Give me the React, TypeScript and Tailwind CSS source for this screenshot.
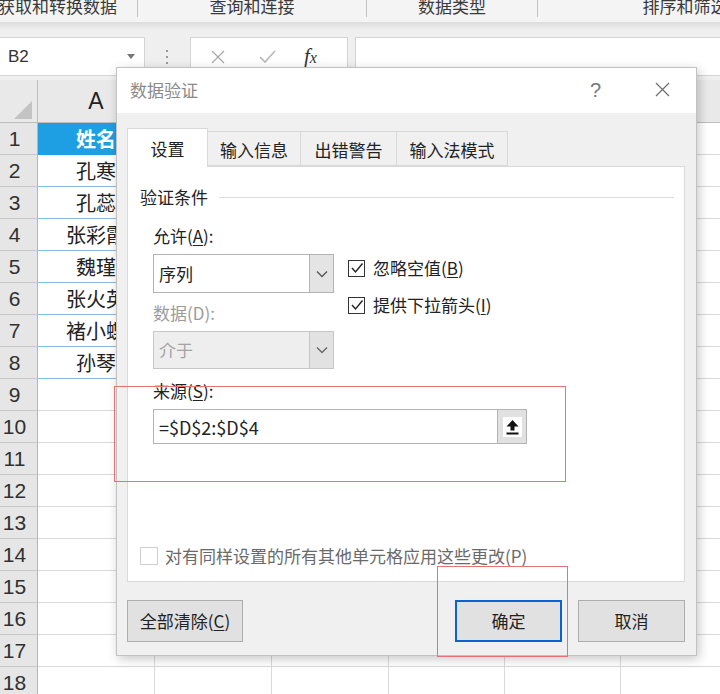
import React from 'react';

const names = ['姓名', '孔寒', '孔蕊', '张彩霞', '魏瑾', '张火英', '褚小蝶', '孙琴'];

// column widths of A..F
const colClass = ['w-[117px]', 'w-[117px]', 'w-[117px]', 'w-[116px]', 'w-[116px]', 'w-[117px]'];

function Chevron({ color = '#555' }: { color?: string }) {
  return (
    <svg width="14" height="14" viewBox="0 0 14 14">
      <polyline points="2,4.5 7,9.5 12,4.5" fill="none" stroke={color} strokeWidth="1.3" />
    </svg>
  );
}

function Check() {
  return (
    <svg width="14" height="14" viewBox="0 0 14 14">
      <polyline points="2,7 5.5,11 12.5,2.5" fill="none" stroke="#222" strokeWidth="1.4" />
    </svg>
  );
}

function Ribbon() {
  return (
    <div className="h-[37px] bg-[#efefef] flex flex-col">
      <div className="h-[22px] bg-[#f4f4f4] flex overflow-hidden text-[17px] leading-[20px] text-[#3a3a3a]">
        <div className="w-[138px] shrink-0 h-[17px] border-r border-[#c4c4c4]">
          <span className="block mt-[-4px] ml-[-2px] whitespace-nowrap">获取和转换数据</span>
        </div>
        <div className="w-[229px] shrink-0 h-[17px] border-r border-[#c4c4c4] flex justify-center">
          <span className="block mt-[-4px] whitespace-nowrap">查询和连接</span>
        </div>
        <div className="w-[171px] shrink-0 h-[17px] border-r border-[#c4c4c4] flex justify-center">
          <span className="block mt-[-4px] whitespace-nowrap">数据类型</span>
        </div>
        <div className="w-[294px] shrink-0 h-[17px] flex justify-center">
          <span className="block mt-[-4px] whitespace-nowrap">排序和筛选</span>
        </div>
      </div>
      <div className="h-[8px] bg-gradient-to-b from-[#dcdcdc] to-[#efefef]" />
    </div>
  );
}

function FormulaBar() {
  return (
    <div className="bg-[#efefef] pb-[4px]">
      <div className="h-[39px] flex">
        <div className="w-[145px] shrink-0 bg-white border border-[#d4d4d4] border-l-0 flex items-center pl-[8px] pr-[9px]">
          <span className="text-[17px] leading-[20px] text-[#333] font-['Liberation_Sans',sans-serif]">B2</span>
          <span className="ml-auto w-0 h-0 border-l-[4px] border-r-[4px] border-t-[5px] border-l-transparent border-r-transparent border-t-[#777]" />
        </div>
        <div className="w-[45px] shrink-0 flex flex-col items-center justify-center gap-[4px] pr-[1px]">
          <span className="w-[2px] h-[2px] bg-[#9a9a9a]" />
          <span className="w-[2px] h-[2px] bg-[#9a9a9a]" />
          <span className="w-[2px] h-[2px] bg-[#9a9a9a]" />
        </div>
        <div className="w-[158px] shrink-0 bg-white border border-[#d4d4d4] flex items-center pl-[20px] gap-[34px]">
          <svg width="14" height="14" viewBox="0 0 14 14">
            <path d="M1 1 L13 13 M13 1 L1 13" stroke="#a8a8a8" strokeWidth="1.2" />
          </svg>
          <svg width="17" height="14" viewBox="0 0 17 14">
            <polyline points="1,7 6,12 16,1" fill="none" stroke="#b8b8b8" strokeWidth="1.6" />
          </svg>
          <span className="italic text-[21px] leading-[20px] text-[#333] font-['Liberation_Serif',serif] -ml-[6px]">
            f<span className="text-[16px]">x</span>
          </span>
        </div>
        <div className="flex-1 ml-[7px] bg-white border border-[#d4d4d4] border-r-0" />
      </div>
    </div>
  );
}

function Sheet() {
  return (
    <div className="flex flex-col">
      {/* column headers */}
      <div className="flex h-[43px] bg-[#e9e9e9] border-b border-[#bdbdbd]">
        <div className="w-[38px] shrink-0 border-r border-[#bdbdbd] flex items-end justify-end pr-[5px] pb-[3px]">
          <svg width="18" height="18" viewBox="0 0 18 18">
            <polygon points="18,0 18,18 0,18" fill="#c3c3c3" />
          </svg>
        </div>
        {colClass.map((w, i) => (
          <div
            key={i}
            className={`${w} shrink-0 border-r border-[#cfcfcf] flex items-center justify-center text-[23px] leading-none text-[#222] font-['Liberation_Sans',sans-serif]`}
          >
            {String.fromCharCode(65 + i)}
          </div>
        ))}
      </div>
      {Array.from({ length: 18 }, (_, r) => {
        const inTable = r < 8;
        return (
          <div key={r} className="flex h-[32px]">
            <div className="w-[38px] shrink-0 bg-[#e6e6e6] border-r border-r-[#b5b5b5] border-b border-b-[#c9c9c9] flex items-center justify-center pr-[8px] text-[21px] leading-none text-[#303030] font-['Liberation_Sans',sans-serif]">
              {r + 1}
            </div>
            {colClass.map((w, c) => {
              if (c === 0) {
                return (
                  <div
                    key={c}
                    className={`${w} shrink-0 flex items-center justify-center border-r border-b text-[20px] leading-none overflow-hidden whitespace-nowrap ${
                      r === 0
                        ? 'bg-[#1e9fe3] text-white font-bold border-[#1e9fe3]'
                        : inTable
                        ? 'bg-white text-[#222] border-b-[#86bfe6] border-r-[#d6d6d6]'
                        : 'bg-white border-[#d9d9d9]'
                    }`}
                  >
                    {inTable ? names[r] : ''}
                  </div>
                );
              }
              return <div key={c} className={`${w} shrink-0 bg-white border-r border-b border-[#d9d9d9]`} />;
            })}
          </div>
        );
      })}
    </div>
  );
}

function Dialog() {
  return (
    <div className="absolute left-[116px] top-[67px] w-[581px] h-[589px] bg-[#f0f0f0] border border-[#c2c2c2] shadow-[2px_3px_10px_rgba(0,0,0,0.22)] flex flex-col text-[#222] text-[17px] leading-[20px]">
      {/* title bar */}
      <div className="h-[45px] shrink-0 bg-white flex items-center pl-[13px] pr-[26px] pb-[2px]">
        <span className="text-[#8a8a8a]">数据验证</span>
        <span className="ml-auto text-[20px] text-[#777] font-['Liberation_Sans',sans-serif]">?</span>
        <svg width="15" height="15" viewBox="0 0 15 15" className="ml-[54px]">
          <path d="M1 1 L14 14 M14 1 L1 14" stroke="#6e6e6e" strokeWidth="1.2" />
        </svg>
      </div>

      {/* body */}
      <div className="flex-1 flex flex-col px-[10px] pt-[15px]">
        {/* tabs */}
        <div className="flex items-end h-[38px]">
          <div className="w-[81px] h-[39px] bg-white border border-[#d9d9d9] border-b-0 relative z-10 -mb-[1px] flex items-center justify-center pt-[2px]">
            设置
          </div>
          <div className="w-[93px] h-[35px] bg-[#f0f0f0] border border-l-0 border-[#d9d9d9] flex items-center justify-center pt-[2px]">
            输入信息
          </div>
          <div className="w-[96px] h-[35px] bg-[#f0f0f0] border border-l-0 border-[#d9d9d9] flex items-center justify-center pt-[2px]">
            出错警告
          </div>
          <div className="w-[111px] h-[35px] bg-[#f0f0f0] border border-l-0 border-[#d9d9d9] flex items-center justify-center pt-[2px]">
            输入法模式
          </div>
        </div>

        {/* panel */}
        <div className="w-[558px] h-[416px] bg-white border border-[#d9d9d9] flex flex-col">
          <div className="mt-[20px] flex items-center pl-[12px] pr-[10px]">
            <span>验证条件</span>
            <div className="flex-1 ml-[11px] h-px bg-[#dcdcdc]" />
          </div>

          <div className="mt-[19px] pl-[25px]">
            允许(<span className="underline underline-offset-2">A</span>):
          </div>

          <div className="mt-[8px] pl-[25px] flex">
            <div className="w-[181px] flex flex-col">
              <div className="h-[39px] flex border border-[#b3b3b3] bg-white">
                <div className="flex-1 flex items-center pl-[5px]">序列</div>
                <div className="w-[24px] bg-[#e4e4e4] border-l border-[#b3b3b3] flex items-center justify-center">
                  <Chevron />
                </div>
              </div>
              <div className="mt-[10px] text-[#9b9b9b]">数据(D):</div>
              <div className="mt-[8px] h-[38px] flex border border-[#c6c6c6] bg-[#eeeeee]">
                <div className="flex-1 flex items-center pl-[5px] text-[#a3a3a3]">介于</div>
                <div className="w-[24px] bg-[#e2e2e2] border-l border-[#c6c6c6] flex items-center justify-center">
                  <Chevron color="#666" />
                </div>
              </div>
            </div>

            <div className="ml-[14px] pt-[5px] flex flex-col gap-[19px]">
              <div className="flex items-center h-[18px]">
                <span className="w-[17px] h-[17px] border border-[#333] bg-white flex items-center justify-center">
                  <Check />
                </span>
                <span className="ml-[8px]">
                  忽略空值(<span className="underline underline-offset-2">B</span>)
                </span>
              </div>
              <div className="flex items-center h-[18px]">
                <span className="w-[17px] h-[17px] border border-[#333] bg-white flex items-center justify-center">
                  <Check />
                </span>
                <span className="ml-[8px]">
                  提供下拉箭头(<span className="underline underline-offset-2">I</span>)
                </span>
              </div>
            </div>
          </div>

          <div className="mt-[12px] pl-[25px]">
            来源(<span className="underline underline-offset-2">S</span>):
          </div>
          <div className="mt-[8px] ml-[25px] w-[374px] h-[35px] flex border border-[#b3b3b3] bg-white">
            <div className="flex-1 flex items-center pl-[5px] text-[18px]">=$D$2:$D$4</div>
            <div className="w-[29px] bg-[#e1e1e1] border-l border-[#b3b3b3] flex items-center justify-center">
              <div className="w-[19px] h-[20px] bg-white flex items-center justify-center">
                <svg width="13" height="16" viewBox="0 0 13 16">
                  <path d="M6.5 1 L12.5 7.5 H8.5 V11.5 H4.5 V7.5 H0.5 Z" fill="#111" />
                  <rect x="0.5" y="13.5" width="12" height="2" fill="#111" />
                </svg>
              </div>
            </div>
          </div>

          <div className="mt-[102px] pl-[12px] flex items-center">
            <span className="w-[18px] h-[18px] border border-[#cfcfcf] bg-white" />
            <span className="ml-[7px] text-[#6a6a6a]">对有同样设置的所有其他单元格应用这些更改(P)</span>
          </div>
        </div>

        {/* buttons */}
        <div className="mt-[18px] flex items-center pr-[1px]">
          <button className="w-[116px] h-[42px] bg-[#e1e1e1] border border-[#adadad] text-[17px] leading-[20px]">
            全部清除(<span className="underline underline-offset-2">C</span>)
          </button>
          <button className="ml-auto w-[107px] h-[42px] bg-[#e1e1e1] border-2 border-[#0b62d3] text-[17px] leading-[20px]">
            确定
          </button>
          <button className="ml-[16px] w-[107px] h-[42px] bg-[#e1e1e1] border border-[#adadad] text-[17px] leading-[20px]">
            取消
          </button>
        </div>
      </div>
    </div>
  );
}

export default function App() {
  return (
    <div className="relative w-[720px] h-[694px] overflow-hidden bg-white font-['Noto_Sans_CJK_SC','Noto_Sans',sans-serif] text-[#262626]">
      <Ribbon />
      <FormulaBar />
      <Sheet />
      <Dialog />
      {/* red annotation boxes */}
      <div className="absolute left-[114px] top-[386px] w-[452px] h-[96px] border border-[#e57373]" />
      <div className="absolute left-[437px] top-[566px] w-[131px] h-[91px] border border-[#e57373]" />
    </div>
  );
}
